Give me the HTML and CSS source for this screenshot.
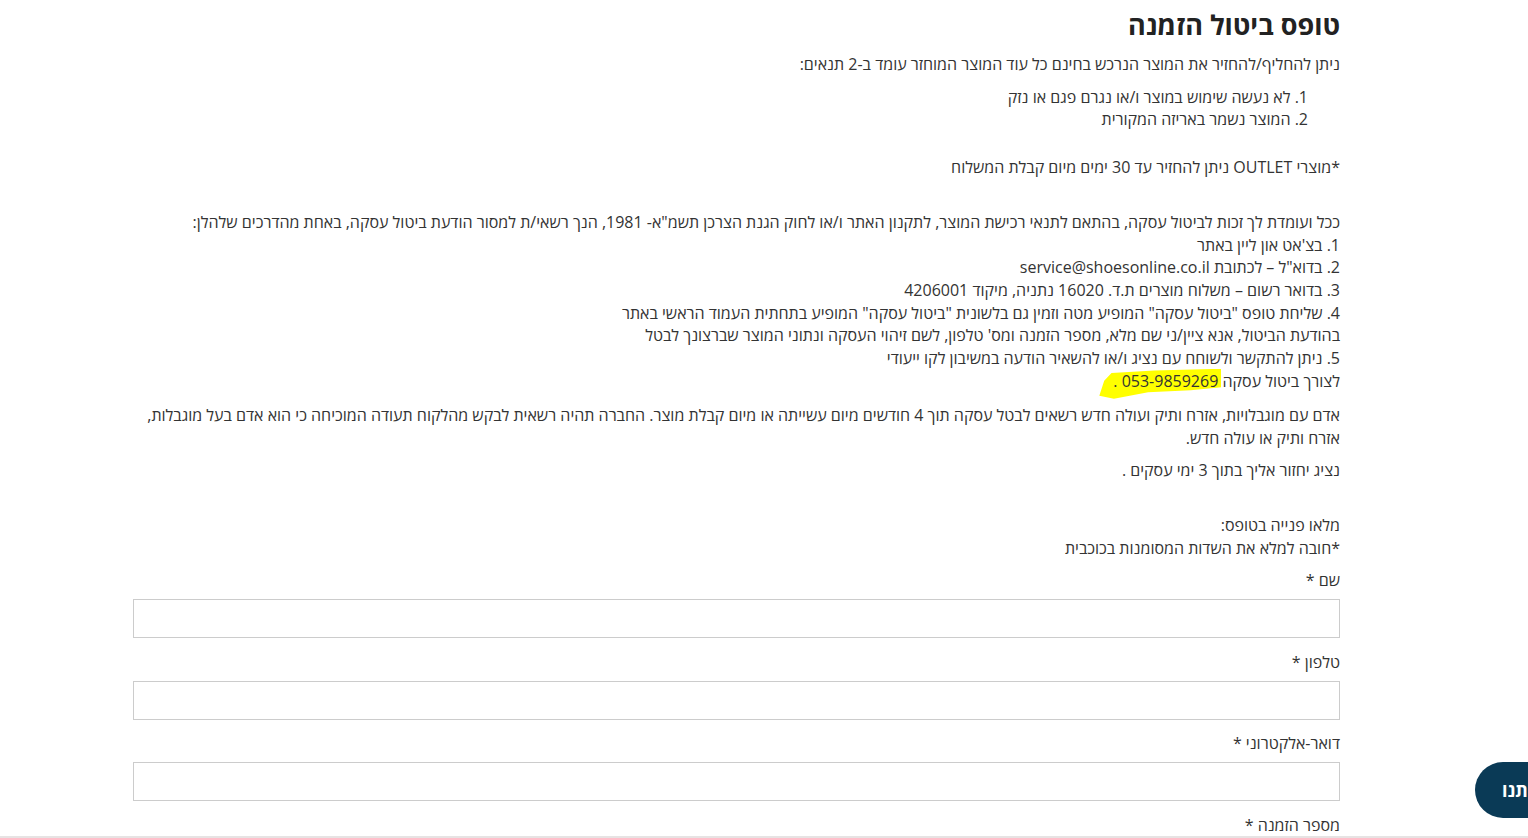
FILE: index.html
```html
<!DOCTYPE html>
<html lang="he" dir="rtl">
<head>
  <meta charset="utf-8">
  <title>טופס ביטול הזמנה</title>
  <link rel="stylesheet" href="styles.css">
</head>
<body>
  <div class="page">
    <h1 class="title">טופס ביטול הזמנה</h1>

    <p class="intro">ניתן להחליף/להחזיר את המוצר הנרכש בחינם כל עוד המוצר המוחזר עומד ב-2 תנאים:</p>
    <div class="conditions">
      <div>1. לא נעשה שימוש במוצר ו/או נגרם פגם או נזק</div>
      <div>2. המוצר נשמר באריזה המקורית</div>
    </div>

    <p class="outlet">*מוצרי OUTLET ניתן להחזיר עד 30 ימים מיום קבלת המשלוח</p>

    <p class="ways">
      ככל ועומדת לך זכות לביטול עסקה, בהתאם לתנאי רכישת המוצר, לתקנון האתר ו/או לחוק הגנת הצרכן תשמ"א- 1981, הנך רשאי/ת למסור הודעת ביטול עסקה, באחת מהדרכים שלהלן:<br>
      1. בצ'אט און ליין באתר<br>
      2. בדוא"ל – לכתובת service@shoesonline.co.il<br>
      3. בדואר רשום – משלוח מוצרים ת.ד. 16020 נתניה, מיקוד 4206001<br>
      4. שליחת טופס "ביטול עסקה" המופיע מטה וזמין גם בלשונית "ביטול עסקה" המופיע בתחתית העמוד הראשי באתר<br>
      בהודעת הביטול, אנא ציין/ני שם מלא, מספר הזמנה ומס' טלפון, לשם זיהוי העסקה ונתוני המוצר שברצונך לבטל<br>
      5. ניתן להתקשר ולשוחח עם נציג ו/או להשאיר הודעה במשיבון לקו ייעודי<br>
      לצורך ביטול עסקה <span class="marker">053-9859269 .</span>
    </p>

    <p>אדם עם מוגבלויות, אזרח ותיק ועולה חדש רשאים לבטל עסקה תוך 4 חודשים מיום עשייתה או מיום קבלת מוצר. החברה תהיה רשאית לבקש מהלקוח תעודה המוכיחה כי הוא אדם בעל מוגבלות, אזרח ותיק או עולה חדש.</p>

    <p>נציג יחזור אליך בתוך 3 ימי עסקים .</p>

    <p class="form-intro">מלאו פנייה בטופס:<br>*חובה למלא את השדות המסומנות בכוכבית</p>

    <form class="cancel-form">
      <div class="field">
        <label for="name">שם *</label>
        <input type="text" id="name" name="name">
      </div>
      <div class="field">
        <label for="phone">טלפון *</label>
        <input type="text" id="phone" name="phone">
      </div>
      <div class="field">
        <label for="email">דואר-אלקטרוני *</label>
        <input type="text" id="email" name="email">
      </div>
      <div class="field">
        <label for="order">מספר הזמנה *</label>
        <input type="text" id="order" name="order">
      </div>
    </form>
  </div>

  <a class="contact-btn" href="#">דברו איתנו</a>
  <div class="bottom-line"></div>
</body>
</html>
```

FILE: styles.css
```css
html, body {
  margin: 0;
  padding: 0;
}

body {
  font-family: "Open Sans", "Noto Sans", Arial, sans-serif;
  font-size: 16px;
  line-height: 22.7px;
  color: #333;
  background: #fff;
  overflow: hidden;
}

.page {
  margin: 0 188px 0 133px;
  padding-top: 8px;
}

.title {
  margin: 0 0 11px;
  font-size: 27px;
  line-height: 34px;
  font-weight: 700;
  color: #222;
}

p {
  margin: 0 0 10px;
}

.intro {
  margin-bottom: 10px;
}

.conditions {
  margin-right: 32px;
  margin-bottom: 25px;
}

.outlet {
  margin-bottom: 32px;
}

.ways {
  margin-bottom: 11.5px;
}

.marker {
  position: relative;
  z-index: 0;
}

.marker::before {
  content: "";
  position: absolute;
  left: -14px;
  right: -3px;
  top: -1px;
  bottom: -7px;
  background: #ffff00;
  z-index: -1;
  clip-path: polygon(10% 14%, 45% 6%, 100% 0, 100% 62%, 75% 72%, 40% 78%, 12% 100%, 0 90%, 4% 40%);
}

.form-intro {
  margin-top: 32px;
  margin-bottom: 10px;
}

.field {
  padding-bottom: 12.7px;
}

.field label {
  display: block;
  margin-bottom: 7px;
}

.field input {
  display: block;
  width: 100%;
  height: 39px;
  box-sizing: border-box;
  border: 1px solid #ccc;
  border-radius: 0;
  padding: 0 10px;
  font-family: inherit;
  font-size: 16px;
  background: #fff;
}

.contact-btn {
  position: fixed;
  bottom: 20px;
  left: 1475px;
  height: 56px;
  padding: 0 27px;
  border-radius: 28px;
  background: #0a3a56;
  color: #fff;
  font-weight: 700;
  font-size: 18px;
  line-height: 56px;
  text-decoration: none;
  white-space: nowrap;
  direction: rtl;
}

.bottom-line {
  position: fixed;
  left: 0;
  right: 0;
  bottom: 0;
  height: 2px;
  background: #e7e3e3;
}
```
